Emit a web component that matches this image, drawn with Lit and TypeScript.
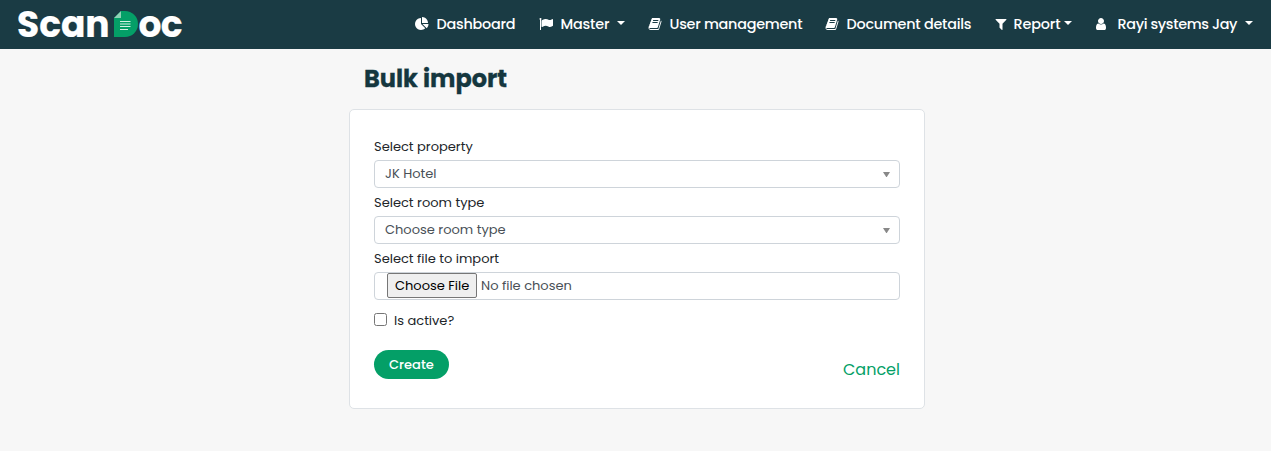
import { LitElement, html, css, svg, nothing } from "lit";
import { customElement, property } from "lit/decorators.js";

const ICONS: Record<string, string> = {
  pie: "M768 890l546 546q-106 108-247.500 168t-298.500 60q-209 0-385.500-103t-279.500-279.500-103-385.500 103-385.500 279.500-279.500 385.500-103v762zM955 896h773q0 157-60 298.500t-168 247.500zM1664 768h-768v-768q209 0 385.500 103t279.500 279.500 103 385.500z",
  flag: "M320 256q0 72-64 110v1266q0 13-9.500 22.500t-22.500 9.500h-64q-13 0-22.500-9.500t-9.500-22.500v-1266q-64-38-64-110 0-53 37.500-90.500t90.500-37.500 90.500 37.500 37.500 90.500zm1472 64v763q0 25-12.500 38.500t-39.500 27.500q-215 116-369 116-61 0-123.500-22t-108.500-48-115.500-48-142.500-22q-192 0-464 146-17 9-33 9-26 0-45-19t-19-45v-742q0-32 31-55 21-14 79-43 236-120 421-120 107 0 200 29t219 88q38 19 88 19 54 0 117.500-21t110-47 88-47 54.500-21q26 0 45 19t19 45z",
  book: "M1703 478q40 57 18 129l-275 906q-19 64-76.500 107.500t-122.500 43.500h-923q-77 0-148.500-53.500t-99.500-131.500q-24-67-2-127 0-4 3-27t4-37q1-8-3-21.500t-3-19.500q2-11 8-21t16.500-23.500 16.500-23.500q23-38 45-91.500t30-91.500q3-10 .5-30t-.5-28q3-11 17-28t17-23q21-36 42-92t25-90q1-9-2.500-32t.5-28q4-13 22-30.500t22-22.500q19-26 42.500-84.500t27.500-96.500q1-8-3-25.500t-2-26.500q2-8 9-18t18-23 17-21q8-12 16.500-30.500t15-35 16-36 19.500-32 26.500-23.500 36-11.500 47.500 5.500l-1 3q38-9 51-9h761q74 0 114 56t18 130l-274 906q-36 119-71.500 153.500t-128.500 34.500h-869q-27 0-38 15-11 16-1 43 24 70 144 70h923q29 0 56-15.500t35-41.500l300-987q7-22 5-57 38 15 59 43zm-1064 2q-4 13 2 22.500t20 9.500h608q13 0 25.500-9.500t16.500-22.500l21-64q4-13-2-22.500t-20-9.500h-608q-13 0-25.500 9.500t-16.500 22.500zm-83 256q-4 13 2 22.500t20 9.500h608q13 0 25.500-9.500t16.500-22.500l21-64q4-13-2-22.500t-20-9.500h-608q-13 0-25.500 9.500t-16.500 22.500z",
  filter: "M1595 295q17 41-14 70l-493 493v742q0 42-39 59-13 5-25 5-27 0-45-19l-256-256q-19-19-19-45v-486l-493-493q-31-29-14-70 17-39 59-39h1280q42 0 59 39z",
  user: "M1536 1399q0 109-62.500 187t-150.500 78h-854q-88 0-150.500-78t-62.500-187q0-85 8.500-160.500t31.500-152 58.500-131 94-89 134.500-34.500q131 128 313 128t313-128q76 0 134.500 34.500t94 89 58.500 131 31.500 152 8.500 160.500zm-256-887q0 159-112.500 271.500t-271.500 112.500-271.500-112.500-112.500-271.500 112.500-271.500 271.500-112.500 271.500 112.500 112.500 271.500z",
};

/** A single line of text tracked out to a given width. */
@customElement("fit-text")
class FitText extends LitElement {
  @property() text = "";
  @property({ type: Number }) w = 0;

  static styles = css`
    :host { display: inline-block; white-space: nowrap; flex: none; }
    span { display: inline-block; white-space: pre; }
  `;

  render() {
    return html`<span>${this.text}</span>`;
  }

  updated() {
    this.fit();
    document.fonts.ready.then(() => this.fit());
  }

  private fit() {
    const span = this.renderRoot.querySelector("span") as HTMLElement;
    this.style.width = `${this.w}px`;
    span.style.letterSpacing = "0px";
    const natural = span.getBoundingClientRect().width;
    const spacing = (this.w - natural) / Math.max(1, this.text.length - 1);
    span.style.letterSpacing = Math.abs(spacing) < 0.13 ? "normal" : `${spacing}px`;
  }
}

interface NavItem {
  icon: string;
  label: string;
  width: number;
  gap: number;
  lead: number;
  caret?: number;
}

const NAV: NavItem[] = [
  { icon: "pie", label: "Dashboard", width: 79, gap: 7.5, lead: 0 },
  { icon: "flag", label: "Master", width: 49, gap: 7.5, lead: 23.5, caret: 7.5 },
  { icon: "book", label: "User management", width: 133, gap: 7.5, lead: 23 },
  { icon: "book", label: "Document details", width: 125, gap: 7.5, lead: 22.5 },
  { icon: "filter", label: "Report", width: 47, gap: 5.5, lead: 22.5, caret: 3.5 },
  { icon: "user", label: "Rayi systems Jay", width: 120, gap: 9.5, lead: 22, caret: 7.5 },
];

@customElement("app-root")
class AppRoot extends LitElement {
  static styles = css`
    :host {
      display: block;
      height: 451px;
      background: #f7f7f7;
      font-family: Poppins, Inter, "Open Sans", sans-serif;
      font-size: 13px;
      color: #212529;
      overflow: hidden;
    }
    * { box-sizing: border-box; }
    .bar {
      display: flex;
      align-items: center;
      height: 49px;
      padding: 0 18px 0 17px;
      background: #1a3b44;
      color: #fff;
    }
    .logo {
      display: flex;
      align-items: center;
      font-size: 36px;
      font-weight: 700;
      line-height: 49px;
      -webkit-text-stroke: 0.2px #fff;
    }
    .logo svg { margin: 0 1px 1px 3.5px; }
    nav { display: flex; align-items: center; margin-left: auto; }
    .item {
      display: flex;
      align-items: center;
      font-size: 14.4px;
      font-weight: 500;
      line-height: 49px;
    }
    .item svg { flex: none; margin-bottom: 1px; }
    .caret {
      width: 8px;
      height: 4px;
      border: 4px solid transparent;
      border-top-color: #fff;
      border-bottom: 0;
      margin-top: -3px;
    }
    main { width: 576px; margin-left: 349px; }
    h1 {
      margin: 0;
      padding: 13px 0 0 15px;
      height: 60px;
      font-size: 24px;
      line-height: 34px;
      font-weight: 700;
      color: #15373f;
      -webkit-text-stroke: 0.3px #15373f;
    }
    .card {
      height: 300px;
      padding: 27px 24px 0;
      background: #fff;
      border: 1px solid #dee2e6;
      border-radius: 5px;
    }
    .label { display: block; height: 23px; line-height: 20px; }
    .field {
      display: flex;
      align-items: center;
      height: 28px;
      margin-bottom: 5px;
      padding: 0 9px 1px 10px;
      border: 1px solid #ced4da;
      border-radius: 4px;
      color: #495057;
    }
    .arrow {
      width: 7px;
      height: 5px;
      margin: 2px 0 0 auto;
      background: #888;
      clip-path: polygon(0 0, 100% 0, 50% 110%);
    }
    .file { padding: 0 0 1px 12px; margin: 0; }
    .choose {
      display: flex;
      align-items: center;
      justify-content: center;
      width: 90px;
      height: 25px;
      margin-right: 4px;
      border: 1px solid #767676;
      border-radius: 2px;
      background: #efefef;
      color: #000;
    }
    .check { display: flex; align-items: center; height: 22px; margin-top: 10px; }
    .box {
      width: 13px;
      height: 13px;
      margin: -3px 7px 0 0;
      border: 1px solid #767676;
      border-radius: 2.5px;
      background: #fff;
    }
    .actions { display: flex; justify-content: space-between; margin-top: 18px; }
    .create {
      display: flex;
      align-items: center;
      justify-content: center;
      width: 75px;
      height: 29px;
      border-radius: 15px;
      background: #049f67;
      color: #fff;
      font-weight: 500;
    }
    .cancel { color: #049f67; font-size: 16px; line-height: 39px; }
  `;

  private icon(name: string) {
    return html`<svg width="14" height="14" viewBox="0 0 1792 1792" fill="#fff">${svg`<path d=${ICONS[name]}></path>`}</svg>`;
  }

  private item(n: NavItem) {
    return html`<div class="item" style="margin-left:${n.lead}px">
      ${this.icon(n.icon)}
      <fit-text style="margin-left:${n.gap}px" .text=${n.label} .w=${n.width}></fit-text>
      ${n.caret ? html`<i class="caret" style="margin-left:${n.caret}px"></i>` : nothing}
    </div>`;
  }

  render() {
    return html`
      <header class="bar">
        <div class="logo">
          <fit-text .text=${"Scan"} .w=${93}></fit-text>
          <svg width="24" height="26" viewBox="0 0 24 26">
            <path d="M7 0h4a13 13 0 0 1 0 26H0V7z" fill="#049f67"></path>
            <path d="M7 0v7H0z" fill="#8ed1b5"></path>
            <path d="M6 10.500h10.500M6 13h10.500M6 15.500h10.500M6 18.500h8" stroke="#d5f0e4" stroke-width="1"></path>
          </svg>
          <fit-text .text=${"oc"} .w=${44}></fit-text>
        </div>
        <nav>${NAV.map((n) => this.item(n))}</nav>
      </header>
      <main>
        <h1><fit-text .text=${"Bulk import"} .w=${143}></fit-text></h1>
        <section class="card">
          <div class="label"><fit-text .text=${"Select property"} .w=${99}></fit-text></div>
          <div class="field"><fit-text .text=${"JK Hotel"} .w=${52}></fit-text><i class="arrow"></i></div>
          <div class="label"><fit-text .text=${"Select room type"} .w=${110}></fit-text></div>
          <div class="field"><fit-text .text=${"Choose room type"} .w=${121}></fit-text><i class="arrow"></i></div>
          <div class="label"><fit-text .text=${"Select file to import"} .w=${125}></fit-text></div>
          <div class="field file">
            <span class="choose"><fit-text .text=${"Choose File"} .w=${74}></fit-text></span>
            <fit-text .text=${"No file chosen"} .w=${91}></fit-text>
          </div>
          <div class="check"><span class="box"></span><fit-text .text=${"Is active?"} .w=${61}></fit-text></div>
          <div class="actions">
            <span class="create"><fit-text .text=${"Create"} .w=${45}></fit-text></span>
            <span class="cancel"><fit-text .text=${"Cancel"} .w=${57}></fit-text></span>
          </div>
        </section>
      </main>
    `;
  }
}
